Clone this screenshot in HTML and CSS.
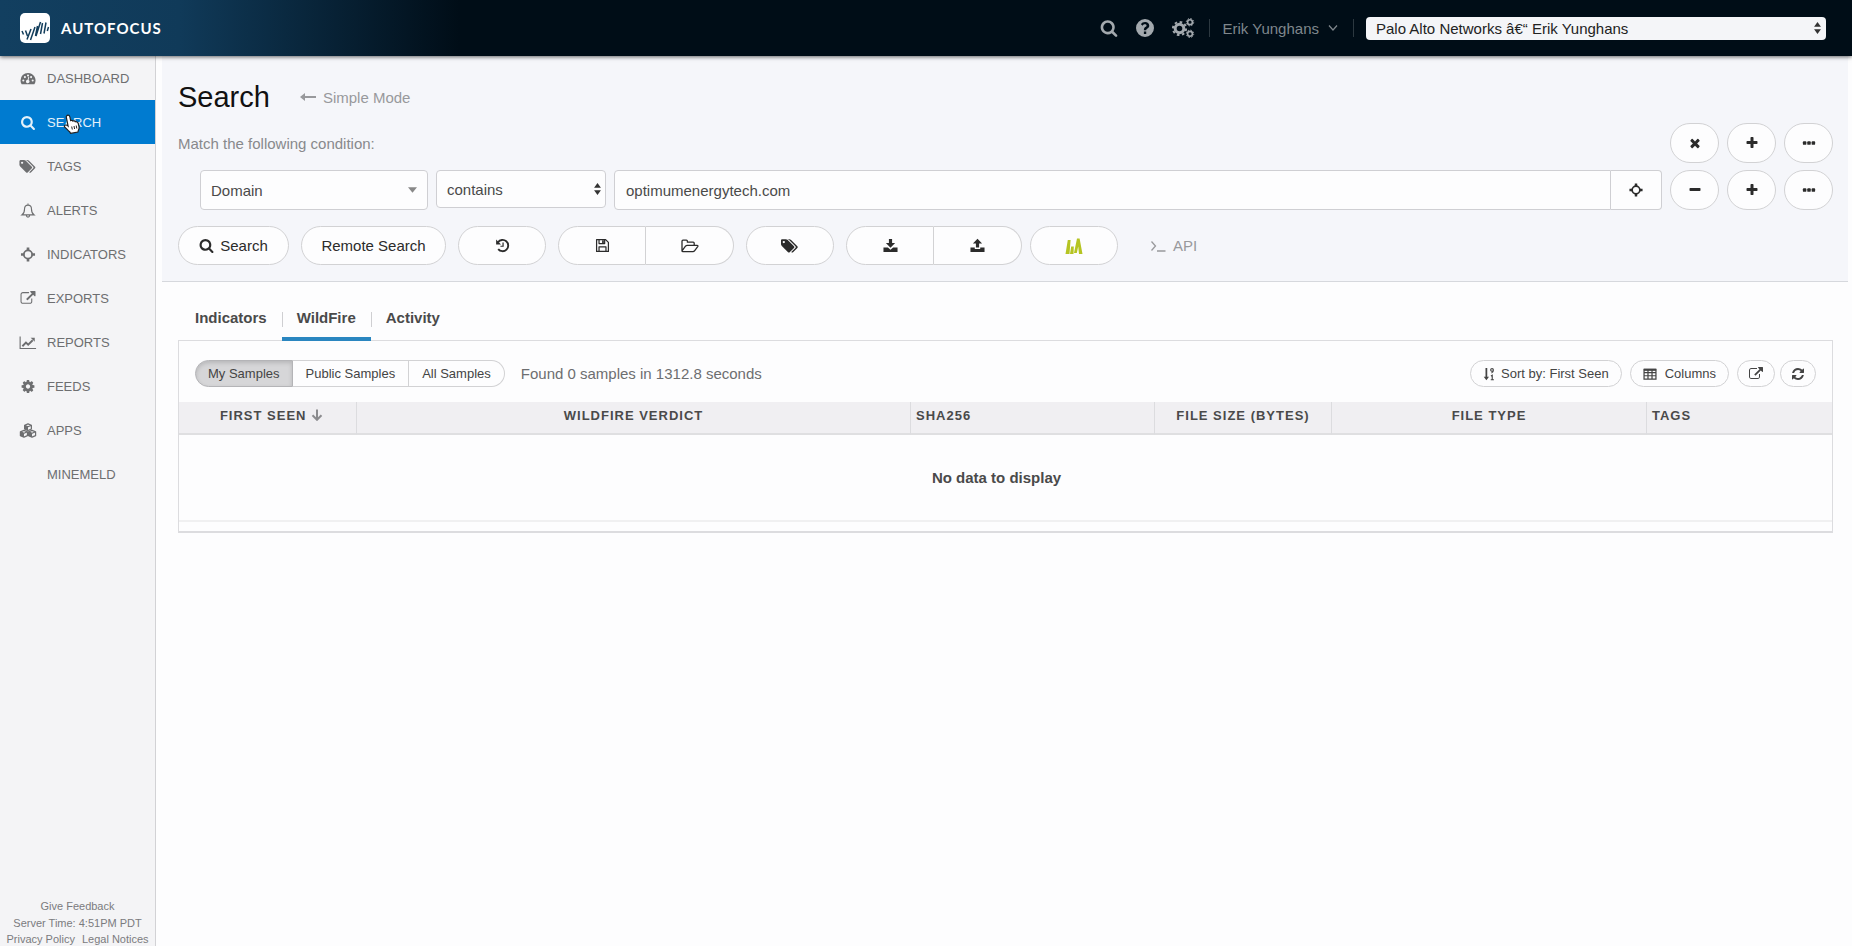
FILE: index.html
```
<!DOCTYPE html>
<html lang="en">
<head>
    <meta charset="UTF-8">
    <meta name="viewport" content="width=device-width, initial-scale=1.0">
    <title>AutoFocus - Search</title>
    <link rel="stylesheet" href="styles.css">
</head>
<body>
    <!-- Shared icons -->
    <svg class="sprite" aria-hidden="true">
        <symbol id="i-search" viewBox="0 0 1792 1792"><path d="M1216 832q0-185-131.500-316.500t-316.500-131.500-316.500 131.500-131.500 316.500 131.500 316.500 316.500 131.500 316.500-131.500 131.500-316.500zm512 832q0 52-38 90t-90 38q-54 0-90-38l-343-342q-179 124-399 124-143 0-273.500-55.500t-225-150-150-225-55.500-273.500 55.500-273.500 150-225 225-150 273.500-55.500 273.500 55.500 225 150 150 225 55.500 273.500q0 220-124 399l343 343q37 37 37 90z"/></symbol>
        <symbol id="i-plus" viewBox="0 0 1792 1792"><path d="M1600 736v192q0 40-28 68t-68 28h-416v416q0 40-28 68t-68 28h-192q-40 0-68-28t-28-68v-416h-416q-40 0-68-28t-28-68v-192q0-40 28-68t68-28h416v-416q0-40 28-68t68-28h192q40 0 68 28t28 68v416h416q40 0 68 28t28 68z"/></symbol>
        <symbol id="i-minus" viewBox="0 0 1792 1792"><rect x="192" y="640" width="1408" height="384" rx="96"/></symbol>
        <symbol id="i-times" viewBox="0 0 1792 1792"><path d="M1490 1322q0 40-28 68l-136 136q-28 28-68 28t-68-28l-294-294-294 294q-28 28-68 28t-68-28l-136-136q-28-28-28-68t28-68l294-294-294-294q-28-28-28-68t28-68l136-136q28-28 68-28t68 28l294 294 294-294q28-28 68-28t68 28l136 136q28 28 28 68t-28 68l-294 294 294 294q28 28 28 68z"/></symbol>
        <symbol id="i-dots" viewBox="0 0 16 16"><rect x="1" y="6" width="4" height="4" rx="1"/><rect x="6" y="6" width="4" height="4" rx="1"/><rect x="11" y="6" width="4" height="4" rx="1"/></symbol>
        <symbol id="i-tags" viewBox="0 0 2048 1792"><path d="M448 448q0-53-37.500-90.500t-90.500-37.500-90.500 37.500-37.500 90.500 37.500 90.500 90.500 37.500 90.500-37.500 37.500-90.500zm1067 576q0 53-37 90l-491 492q-39 37-91 37-53 0-90-37l-715-716q-38-37-64.500-101t-26.500-117v-416q0-52 38-90t90-38h416q53 0 117 26.500t102 64.500l715 714q37 39 37 91zm384 0q0 53-37 90l-491 492q-39 37-91 37-36 0-59-14t-53-45l470-470q37-37 37-90 0-52-37-91l-715-714q-38-38-102-64.500t-117-26.500h224q53 0 117 26.500t102 64.500l715 714q37 39 37 91z"/></symbol>
        <symbol id="i-cog" viewBox="0 0 1792 1792"><path d="M1152 896q0-106-75-181t-181-75-181 75-75 181 75 181 181 75 181-75 75-181zm512-109v222q0 12-8 23t-20 13l-185 28q-19 54-39 91 35 50 107 138 10 12 10 25t-9 23q-27 37-99 108t-94 71q-12 0-26-9l-138-108q-44 23-91 38-16 136-29 186-7 28-36 28h-222q-14 0-24.500-8.500t-11.500-21.500l-28-184q-49-16-90-37l-141 107q-10 9-25 9-14 0-25-11-126-114-165-168-7-10-7-23 0-12 8-23 15-21 51-66.500t54-70.500q-27-50-41-99l-183-27q-13-2-21-12.500t-8-23.500v-222q0-12 8-23t19-13l186-28q14-46 39-92-40-57-107-138-10-12-10-24 0-10 9-23 26-36 98.500-107.500t94.500-71.500q13 0 26 10l138 107q44-23 91-38 16-136 29-186 7-28 36-28h222q14 0 24.500 8.500t11.500 21.500l28 184q49 16 90 37l142-107q9-9 24-9 13 0 25 10 129 119 165 170 7 8 7 22 0 12-8 23-15 21-51 66.500t-54 70.500q26 50 41 98l183 28q13 2 21 12.500t8 23.500z"/></symbol>
        <symbol id="i-export" viewBox="0 0 1792 1792"><path d="M1408 928v320q0 119-84.500 203.500t-203.500 84.500h-832q-119 0-203.500-84.500t-84.500-203.500v-832q0-119 84.500-203.500t203.500-84.500h704q14 0 23 9t9 23v64q0 14-9 23t-23 9h-704q-66 0-113 47t-47 113v832q0 66 47 113t113 47h832q66 0 113-47t47-113v-320q0-14 9-23t23-9h64q14 0 23 9t9 23zm384-864v512q0 26-19 45t-45 19-45-19l-176-176-652 652q-10 10-23 10t-23-10l-114-114q-10-10-10-23t10-23l652-652-176-176q-19-19-19-45t19-45 45-19h512q26 0 45 19t19 45z"/></symbol>
        <symbol id="i-refresh" viewBox="0 0 1792 1792"><path d="M1639 1056q0 5-1 7-64 268-268 434.500t-478 166.500q-146 0-282.500-55t-243.500-157l-129 129q-19 19-45 19t-45-19-19-45v-448q0-26 19-45t45-19h448q26 0 45 19t19 45-19 45l-137 137q71 66 161 102t187 36q134 0 250-65t186-179q11-17 53-117 8-23 30-23h192q13 0 22.500 9.500t9.500 22.500zm25-800v448q0 26-19 45t-45 19h-448q-26 0-45-19t-19-45 19-45l138-138q-148-137-349-137-134 0-250 65t-186 179q-11 17-53 117-8 23-30 23h-199q-13 0-22.500-9.500t-9.500-22.500v-7q65-268 270-434.500t480-166.500q146 0 284 55.500t245 156.500l130-129q19-19 45-19t45 19 19 45z"/></symbol>
        <symbol id="i-target" viewBox="0 0 16 16"><circle cx="8" cy="8" r="4.400" fill="none" stroke="currentColor" stroke-width="1.900"/><path d="M6.600.5h2.800V4H6.600zM6.600 12h2.800v3.500H6.600zM.5 6.600H4v2.800H.5zM12 6.600h3.500v2.800H12z"/></symbol>
        <symbol id="i-dashboard" viewBox="0 0 16 16"><path fill-rule="evenodd" d="M8 2a8 8 0 0 0-8 8c0 1.600.4 3 1.200 4.200h13.600A8 8 0 0 0 8 2zM3 9a1.100 1.100 0 1 1 0 2.200A1.100 1.100 0 0 1 3 9zm1.700-3.600a1.100 1.100 0 1 1 0 2.200 1.100 1.100 0 0 1 0-2.200zM8 3.600a1.100 1.100 0 1 1 0 2.200 1.100 1.100 0 0 1 0-2.200zm3.300 1.800a1.100 1.100 0 1 1 0 2.200 1.100 1.100 0 0 1 0-2.200zM13 9a1.100 1.100 0 1 1 0 2.200A1.100 1.100 0 0 1 13 9zM8.400 6.200l.9.300-.7 3a1.900 1.900 0 1 1-1-.200z"/></symbol>
        <symbol id="i-bell" viewBox="0 0 16 16"><path d="M8 2.200C5.600 2.200 4.300 4 4.300 6.400c0 3.600-.9 5-2.600 6.200h12.600c-1.700-1.200-2.600-2.600-2.600-6.200 0-2.400-1.300-4.200-3.700-4.200zM8 .6v1.600M6.300 13.400a1.700 1.700 0 0 0 3.400 0" fill="none" stroke="currentColor" stroke-width="1.200"/></symbol>
        <symbol id="i-chart" viewBox="0 0 18 16"><path d="M.6 1.500v12.900h17" fill="none" stroke="currentColor" stroke-width="1.200"/><path d="M3 12l3.800-4 2.400 2.400L14 5.600" fill="none" stroke="currentColor" stroke-width="2"/><path d="M11.800 2.800h4.400v4.400z"/></symbol>
        <symbol id="i-cubes" viewBox="0 0 18 16"><g fill="none" stroke="currentColor" stroke-width="1.300" stroke-linejoin="round"><path d="M9 .9l3.600 1.500v4L9 8 5.400 6.400v-4zM5.400 2.400L9 4l3.600-1.600M4.700 7.900l3.700 1.500v4.100L4.700 15 .9 13.500V9.400zM.9 9.400L4.700 11l3.700-1.600M13.300 7.900l3.800 1.500v4.100L13.300 15l-3.700-1.500V9.400zM9.600 9.400l3.700 1.600 3.800-1.600"/></g><path d="M9 4l-3.600-1.600v4L9 8zM4.700 11L.9 9.400v4.100L4.700 15zM13.300 11L9.600 9.400v4.100l3.700 1.500z"/></symbol>
        <symbol id="i-help" viewBox="0 0 16 16"><path fill-rule="evenodd" d="M8 0a8 8 0 1 0 0 16A8 8 0 0 0 8 0zM7 11.200h2.100v2.100H7zm0-1.100h2.100c0-.9.300-1.200 1.100-1.700 1-.6 1.600-1.400 1.600-2.500 0-1.900-1.600-3.200-3.700-3.200-1.700 0-2.900.7-3.700 2l1.500 1.200c.6-.8 1.100-1.200 2-1.200.8 0 1.500.5 1.500 1.100 0 .7-.5 1-1.200 1.400C7.500 7.700 7 8.600 7 10.100z"/></symbol>
        <symbol id="i-history" viewBox="0 0 16 16"><path d="M3.200 4.600A6 6 0 1 1 3.400 11.800" fill="none" stroke="currentColor" stroke-width="2"/><path d="M1.200 1.600v5.200h5.200z"/><path d="M8.600 4.800v4H5.800" fill="none" stroke="currentColor" stroke-width="1.300"/></symbol>
        <symbol id="i-save" viewBox="0 0 16 16"><path d="M1.700 1.700h9.600l3 3v9.600H1.700zM4.300 14.300V9.500h7.400v4.800M4.300 1.700v4.200h6V1.700" fill="none" stroke="currentColor" stroke-width="1.300" stroke-linejoin="round"/><path d="M7.600 2.400h1.800v2.800H7.600z"/></symbol>
        <symbol id="i-folder" viewBox="0 0 18 16"><path d="M1 12.600V3.200c0-.6.400-1 1-1h3.400c.6 0 1 .4 1 1v1h5.800c.6 0 1 .4 1 1v2M1 12.900l3.500-4.700c.5-.6 1-.9 1.700-.9H16c1 0 1.200.6.700 1.300l-3 4c-.5.700-1 1-1.800 1H2c-.6 0-1-.3-1-.9z" fill="none" stroke="currentColor" stroke-width="1.300" stroke-linejoin="round"/></symbol>
        <symbol id="i-download" viewBox="0 0 16 16"><path d="M6.300 1h3.400v4.400h3.200L8 10.300 3.100 5.400h3.200z"/><path d="M.5 10.200h4.700L8 12.600l2.800-2.400h4.700V15H.5z"/></symbol>
        <symbol id="i-upload" viewBox="0 0 16 16"><path d="M6.300 10.200h3.400V5.800h3.200L8 .9 3.100 5.800h3.200z"/><path d="M.5 10.200h4.600v1.600h5.800v-1.600h4.600V15H.5z"/></symbol>
        <symbol id="i-bars" viewBox="0 0 18 18"><path d="M.5 17L2.800 3h2.800L4.500 17zM5 17l1.200-7.500h2.600L8.500 17zM9 16l3-14.500h2.600L17.500 17H14l-.8-7.500L11.800 16z"/></symbol>
        <symbol id="i-prompt" viewBox="0 0 16 16"><path d="M1.500 3.500L5.500 8l-4 4.500M7 13h8.500" fill="none" stroke="currentColor" stroke-width="1.300"/></symbol>
        <symbol id="i-sort" viewBox="0 0 12 16"><path d="M2 1h2v10h2l-3 4-3-4h2z"/><path d="M9.500 1.800a1.500 1.500 0 1 0 0 3 1.500 1.500 0 0 0 0-3zM11 3.300c0 2-.6 3-2.200 3.600M8.200 10.300l1.500-.9v5M8 14.600h3.600" fill="none" stroke="currentColor" stroke-width="1.300"/></symbol>
        <symbol id="i-table" viewBox="0 0 16 16"><path d="M1.200 2.600h13.600v11.200H1.200zM1 6.400h14M1 10h14M5.700 3v11M10.300 3v11" fill="none" stroke="currentColor" stroke-width="1.400"/><path d="M1 2h14v2.400H1z"/></symbol>
        <symbol id="i-updown" viewBox="0 0 8 14"><path d="M4 0l4 5.500H0zM4 14l4-5.500H0z"/></symbol>
        <symbol id="i-arrow-left" viewBox="0 0 16 10"><path d="M0 5l5-4v3h11v2H5v3z"/></symbol>
        <symbol id="i-arrow-down" viewBox="0 0 12 12"><path d="M6 .5v10M1.500 6.200L6 10.800l4.500-4.600" fill="none" stroke="currentColor" stroke-width="2"/></symbol>
    </svg>

    <header class="topbar">
        <a class="brand" href="#">
            <svg class="logo" viewBox="0 0 30 30">
                <rect width="30" height="30" rx="5" fill="#fff"/>
                <path d="M2 18l1.500 3.500M5.500 17.500l2 5.500M11 16l-4 10.500M15 14l-4.500 13M17.500 13l-2 10M20.500 9l-4.500 14M22.500 10l-2 11M26 9.500l-2 11M28.500 14l-1.200 4" fill="none" stroke="#123d5b" stroke-width="1.500"/>
            </svg>
            <span>AUTOFOCUS</span>
        </a>
        <div class="topbar-tools">
            <button class="tool" aria-label="Quick search"><svg><use href="#i-search"/></svg></button>
            <button class="tool" aria-label="Help"><svg><use href="#i-help"/></svg></button>
            <button class="tool tool-wide" aria-label="Settings">
                <svg viewBox="0 0 23 20">
                    <g fill="none" stroke="currentColor">
                        <circle cx="7.500" cy="10.500" r="4.300" stroke-width="3"/>
                        <circle cx="7.500" cy="10.500" r="6.600" stroke-width="2" stroke-dasharray="2.600 2.580"/>
                        <circle cx="18" cy="4.200" r="2.400" stroke-width="1.600"/>
                        <circle cx="18" cy="4.200" r="3.700" stroke-width="1" stroke-dasharray="1.450 1.450"/>
                        <circle cx="18" cy="15.800" r="2.400" stroke-width="1.600"/>
                        <circle cx="18" cy="15.800" r="3.700" stroke-width="1" stroke-dasharray="1.450 1.450"/>
                    </g>
                </svg>
            </button>
            <button class="user">Erik Yunghans
                <svg viewBox="0 0 10 8"><path d="M1 1.500l4 4.500 4-4.500" fill="none" stroke="currentColor" stroke-width="1.200"/></svg>
            </button>
            <div class="select account">
                <select aria-label="Account">
                    <option>Palo Alto Networks â€“ Erik Yunghans</option>
                </select>
                <svg class="updown"><use href="#i-updown"/></svg>
            </div>
        </div>
    </header>

    <div class="layout">
        <aside class="sidebar">
            <nav>
                <a href="#"><svg><use href="#i-dashboard"/></svg>DASHBOARD</a>
                <a href="#" class="active"><svg><use href="#i-search"/></svg>SEARCH
                    <svg class="pointer" viewBox="0 0 18 20"><path d="M5 1.200c1.300 0 1.700.8 1.900 1.800l.7 3.600c.8-.5 1.900-.3 2.300.5.900-.5 2-.2 2.400.7 1.200-.4 2.500.2 2.900 1.500l.8 3.200c.3 1.300 0 2.600-.6 3.700l-.5 1.900-7.300 1.300-1-1.700c-1.700-1.200-3-3.200-4.700-4.500-1-.8-.3-2.400 1-2.200.9.100 1.600.6 2.200 1.100L3.300 3.200c-.2-1.100.6-2 1.700-2z" fill="#fff" stroke="#222" stroke-width="1.200"/><path d="M8.700 12.500l.6 3M11 12l.6 3M13.200 11.500l.6 3" stroke="#222" stroke-width="1" fill="none"/></svg>
                </a>
                <a href="#"><svg><use href="#i-tags"/></svg>TAGS</a>
                <a href="#"><svg><use href="#i-bell"/></svg>ALERTS</a>
                <a href="#"><svg><use href="#i-target"/></svg>INDICATORS</a>
                <a href="#"><svg><use href="#i-export"/></svg>EXPORTS</a>
                <a href="#"><svg><use href="#i-chart"/></svg>REPORTS</a>
                <a href="#"><svg><use href="#i-cog"/></svg>FEEDS</a>
                <a href="#"><svg><use href="#i-cubes"/></svg>APPS</a>
                <a href="#"><svg></svg>MINEMELD</a>
            </nav>
            <footer>
                <a href="#">Give Feedback</a>
                <div>Server Time: 4:51PM PDT</div>
                <div class="legal"><a href="#">Privacy Policy</a><a href="#">Legal Notices</a></div>
            </footer>
        </aside>

        <main>
            <section class="search-panel">
                <div class="title-row">
                    <h1>Search</h1>
                    <a href="#"><svg><use href="#i-arrow-left"/></svg>Simple Mode</a>
                </div>

                <div class="match-row">
                    <p>Match the following condition:</p>
                    <button class="pill round" aria-label="Clear"><svg><use href="#i-times"/></svg></button>
                    <button class="pill round" aria-label="Add group"><svg><use href="#i-plus"/></svg></button>
                    <button class="pill round" aria-label="More"><svg><use href="#i-dots"/></svg></button>
                </div>

                <div class="condition-row">
                    <div class="select field">
                        <select aria-label="Field"><option>Domain</option></select>
                        <svg class="caret" viewBox="0 0 10 6"><path d="M0 0h10L5 6z"/></svg>
                    </div>
                    <div class="select operator">
                        <select aria-label="Operator"><option>contains</option></select>
                        <svg class="updown"><use href="#i-updown"/></svg>
                    </div>
                    <div class="value">
                        <input type="text" aria-label="Value" value="optimumenergytech.com">
                        <button aria-label="Find indicator"><svg><use href="#i-target"/></svg></button>
                    </div>
                    <button class="pill round" aria-label="Remove condition"><svg><use href="#i-minus"/></svg></button>
                    <button class="pill round" aria-label="Add condition"><svg><use href="#i-plus"/></svg></button>
                    <button class="pill round" aria-label="More"><svg><use href="#i-dots"/></svg></button>
                </div>

                <div class="actions">
                    <button class="pill search-btn"><svg><use href="#i-search"/></svg>Search</button>
                    <button class="pill remote-btn">Remote Search</button>
                    <button class="pill wide" aria-label="History"><svg><use href="#i-history"/></svg></button>
                    <div class="group">
                        <button class="pill wide" aria-label="Save search"><svg><use href="#i-save"/></svg></button>
                        <button class="pill wide" aria-label="Open search"><svg class="folder"><use href="#i-folder"/></svg></button>
                    </div>
                    <button class="pill wide" aria-label="Tag results"><svg class="tag"><use href="#i-tags"/></svg></button>
                    <div class="group transfer">
                        <button class="pill wide" aria-label="Import"><svg><use href="#i-download"/></svg></button>
                        <button class="pill wide" aria-label="Export"><svg><use href="#i-upload"/></svg></button>
                    </div>
                    <button class="pill wide minemeld" aria-label="MineMeld"><svg><use href="#i-bars"/></svg></button>
                    <a class="api" href="#"><svg><use href="#i-prompt"/></svg>API</a>
                </div>
            </section>

            <section class="results">
                <nav class="tabs">
                    <a href="#">Indicators</a>
                    <a href="#" class="active">WildFire</a>
                    <a href="#">Activity</a>
                </nav>

                <div class="panel">
                    <div class="toolbar">
                        <div class="group">
                            <button class="pill small pressed">My Samples</button>
                            <button class="pill small">Public Samples</button>
                            <button class="pill small">All Samples</button>
                        </div>
                        <span class="found">Found 0 samples in 1312.8 seconds</span>
                        <button class="pill small"><svg class="sort"><use href="#i-sort"/></svg>Sort by: First Seen</button>
                        <button class="pill small columns"><svg><use href="#i-table"/></svg>Columns</button>
                        <button class="pill small icon-only" aria-label="Open in new window"><svg><use href="#i-export"/></svg></button>
                        <button class="pill small icon-only last" aria-label="Refresh"><svg><use href="#i-refresh"/></svg></button>
                    </div>

                    <table>
                        <colgroup>
                            <col class="c-seen">
                            <col>
                            <col class="c-sha">
                            <col class="c-size">
                            <col class="c-type">
                            <col class="c-tags">
                        </colgroup>
                        <thead>
                            <tr>
                                <th class="sorted">FIRST SEEN <svg><use href="#i-arrow-down"/></svg></th>
                                <th>WILDFIRE VERDICT</th>
                                <th class="left">SHA256</th>
                                <th>FILE SIZE (BYTES)</th>
                                <th>FILE TYPE</th>
                                <th class="left">TAGS</th>
                            </tr>
                        </thead>
                        <tbody>
                            <tr>
                                <td colspan="6">No data to display</td>
                            </tr>
                        </tbody>
                    </table>
                </div>
            </section>
        </main>
    </div>
</body>
</html>
```
FILE: styles.css
```
* {
    box-sizing: border-box;
}

body {
    margin: 0;
    min-height: 100vh;
    display: flex;
    flex-direction: column;
    font-family: "Liberation Sans", Arial, sans-serif;
    font-size: 15px;
    color: #4a4a4a;
    background-color: #fdfdfe;
}

a {
    color: inherit;
    text-decoration: none;
}

button,
select,
input {
    font: inherit;
    color: inherit;
    margin: 0;
}

button {
    cursor: pointer;
}

svg {
    fill: currentColor;
    width: 16px;
    height: 16px;
    flex: none;
}

.sprite {
    position: absolute;
    width: 0;
    height: 0;
}

/* Top bar */
.topbar {
    position: relative;
    height: 56px;
    padding: 0 26px 0 20px;
    display: flex;
    align-items: center;
    justify-content: space-between;
    background: linear-gradient(90deg, #123f60 0, #103a59 180px, #000d17 460px);
    box-shadow: 0 1px 4px rgba(0, 0, 0, 0.6);
}

.brand {
    display: flex;
    align-items: center;
    gap: 11px;
    color: #ffffff;
    font-family: Lato, sans-serif;
    font-size: 15px;
    font-weight: bold;
    letter-spacing: 1px;
}

.logo {
    width: 30px;
    height: 30px;
}

.topbar-tools {
    display: flex;
    align-items: center;
    color: #8f979d;
}

.tool {
    display: flex;
    padding: 0;
    margin-right: 18px;
    border: 0;
    background: none;
    color: #a3a9ae;
}

.tool svg {
    width: 18px;
    height: 18px;
}

.tool-wide {
    margin-right: 14px;
}

.tool-wide svg {
    width: 23px;
    height: 20px;
}

.user {
    display: flex;
    align-items: center;
    gap: 9px;
    height: 18px;
    padding: 0 15px 0 13px;
    margin-right: 12px;
    border: solid #2c3840;
    border-width: 0 1px;
    background: none;
    color: #7f878d;
}

.user svg {
    width: 10px;
    height: 8px;
}

/* Drop-downs */
.select {
    position: relative;
}

.select select {
    display: block;
    width: 100%;
    height: 100%;
    padding: 0 10px;
    appearance: none;
    border: 1px solid #cfcfd3;
    border-radius: 4px;
    background-color: #fdfdfe;
}

.select svg {
    position: absolute;
    top: 50%;
    transform: translateY(-50%);
    pointer-events: none;
}

.select .updown {
    right: 5px;
    width: 7px;
    height: 12px;
    color: #333333;
}

.select .caret {
    right: 11px;
    width: 9px;
    height: 6px;
    color: #888888;
}

.account {
    width: 460px;
    height: 23px;
    color: #222222;
}

.account select {
    border: 0;
    background-color: #f4f5f8;
}

/* Sidebar */
.layout {
    flex: 1;
    display: flex;
}

.sidebar {
    width: 156px;
    flex: none;
    display: flex;
    flex-direction: column;
    justify-content: space-between;
    border-right: 1px solid #d2d2d5;
    background-color: #f4f4f6;
    color: #6d6e70;
}

.sidebar nav a {
    position: relative;
    display: flex;
    align-items: center;
    gap: 10px;
    height: 44px;
    padding-left: 19px;
    font-size: 13px;
}

.sidebar nav svg {
    width: 18px;
    height: 15px;
}

.sidebar nav a.active {
    background-color: #007bd0;
    color: #e4f1fa;
}

.sidebar nav .pointer {
    position: absolute;
    left: 63px;
    top: 14px;
    width: 18px;
    height: 20px;
}

.sidebar footer {
    font-size: 11px;
    line-height: 17px;
    text-align: center;
    color: #7b7b7e;
}

.legal {
    display: flex;
    justify-content: center;
    gap: 7px;
    line-height: 14px;
}

/* Search panel */
main {
    flex: 1;
    min-width: 0;
}

.search-panel {
    margin: 0 4px 0 6px;
    padding: 25px 15px 16px 16px;
    border-bottom: 1px solid #d6d8dd;
    background-color: #f5f6fa;
}

.title-row {
    display: flex;
    align-items: center;
    gap: 30px;
    height: 32px;
    margin-bottom: 10px;
    color: #98999c;
}

.title-row h1 {
    margin: 0;
    font-size: 29px;
    font-weight: normal;
    color: #111111;
}

.title-row a {
    display: flex;
    align-items: center;
    gap: 7px;
}

.title-row svg {
    height: 10px;
}

.match-row,
.condition-row {
    display: flex;
    gap: 8px;
}

.match-row {
    align-items: center;
    margin-bottom: 7px;
}

.match-row p {
    flex: 1;
    margin: 0;
    color: #88898c;
}

.condition-row {
    padding-left: 22px;
    margin-bottom: 16px;
}

.field {
    width: 228px;
    height: 40px;
}

.operator {
    width: 170px;
    height: 38px;
}

.value {
    flex: 1;
    display: flex;
    height: 40px;
}

.value input {
    flex: 1;
    min-width: 0;
    padding: 0 11px;
    border: 1px solid #cfcfd3;
    border-radius: 4px 0 0 4px;
    background-color: #fdfdfe;
}

.value button {
    display: flex;
    align-items: center;
    justify-content: center;
    width: 51px;
    border: 1px solid #cfcfd3;
    border-left: 0;
    border-radius: 0 4px 4px 0;
    background-color: #fdfdfe;
    color: #2b2b2b;
}

.value svg {
    width: 14px;
    height: 14px;
}

/* Buttons */
.pill {
    display: flex;
    align-items: center;
    justify-content: center;
    gap: 6px;
    height: 39px;
    padding: 0;
    border: 1px solid #d2d2d4;
    border-radius: 20px;
    background-color: #fdfdfe;
    color: #2b2b2b;
}

.pill svg {
    width: 15px;
    height: 15px;
}

.pill .folder,
.pill .tag {
    width: 18px;
    height: 16px;
}

.round {
    width: 49px;
    height: 40px;
}

.round svg {
    width: 14px;
    height: 14px;
}

.wide {
    width: 88px;
}

.actions {
    display: flex;
    align-items: center;
    gap: 12px;
}

.search-btn {
    width: 111px;
}

.remote-btn {
    width: 145px;
}

.group {
    display: flex;
}

.group .pill {
    border-radius: 0;
}

.group .pill + .pill {
    border-left: 0;
}

.group .pill:first-child {
    border-radius: 20px 0 0 20px;
}

.group .pill:last-child {
    border-radius: 0 20px 20px 0;
}

.transfer {
    margin-right: -4px;
}

.pill.minemeld {
    color: #b5c422;
}

.minemeld svg {
    width: 18px;
    height: 18px;
}

.api {
    display: flex;
    align-items: center;
    gap: 7px;
    margin-left: 20px;
    color: #98999c;
}

/* Results */
.results {
    padding: 17px 19px 0 22px;
}

.tabs {
    position: relative;
    display: flex;
    padding-left: 2px;
    margin-bottom: -1px;
    font-weight: bold;
}

.tabs a {
    position: relative;
    padding: 0 15px;
    line-height: 38px;
    border-bottom: 4px solid transparent;
}

.tabs a.active {
    border-bottom-color: #2a86c0;
}

/* divider between two tabs */
.tabs a + a::before {
    content: "";
    position: absolute;
    left: 0;
    top: 13px;
    width: 1px;
    height: 15px;
    background-color: #cfcfd2;
}

.panel {
    border: 1px solid #dcdcdf;
    border-bottom: 2px solid #dcdcdf;
    padding-bottom: 9px;
}

.toolbar {
    display: flex;
    align-items: center;
    padding: 19px 16px 15px;
}

.small {
    height: 27px;
    padding: 0 12px;
    margin-left: 8px;
    font-size: 13px;
    color: #444444;
}

.small svg {
    width: 14px;
    height: 14px;
}

.small.columns {
    gap: 8px;
}

.small .sort {
    width: 12px;
}

.small.icon-only {
    padding: 0 11px;
}

.small.last {
    padding: 0 10px;
    margin-left: 5px;
}

.group .small {
    padding: 0 13px;
    margin-left: 0;
}

.group .small.pressed {
    padding: 0 12px;
    background-color: #d6d6d8;
    border-color: #b4b4b7;
    box-shadow: inset 0 2px 4px rgba(0, 0, 0, 0.15);
}

.found {
    flex: 1;
    margin-left: 16px;
    color: #6d6e70;
}

table {
    width: 100%;
    table-layout: fixed;
    border-collapse: separate;
    border-spacing: 0;
}

.c-seen {
    width: 178px;
}

.c-sha {
    width: 244px;
}

.c-size {
    width: 177px;
}

.c-type {
    width: 315px;
}

.c-tags {
    width: 185px;
}

th {
    height: 33px;
    padding: 0 4px 4px;
    border-bottom: 2px solid #dfdfe1;
    border-right: 1px solid #dcdcdf;
    background-color: #f0eff2;
    font-size: 13px;
    letter-spacing: 1px;
}

th:last-child {
    border-right: 0;
}

th.left {
    padding-left: 5px;
    text-align: left;
}

th.sorted {
    padding-left: 12px;
}

th svg {
    width: 12px;
    height: 12px;
    color: #8b8b8e;
    vertical-align: -1px;
}

td {
    height: 87px;
    padding: 0 18px 0 0;
    border-bottom: 2px solid #f0f0f1;
    text-align: center;
    font-weight: bold;
}
```
